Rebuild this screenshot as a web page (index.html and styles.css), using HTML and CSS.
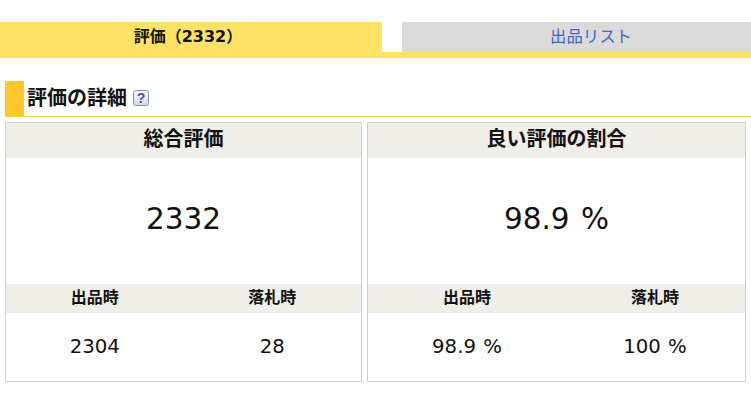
FILE: index.html
```html
<!DOCTYPE html>
<html lang="ja">
<head>
<meta charset="utf-8">
<title>評価の詳細</title>
<link rel="stylesheet" href="styles.css">
</head>
<body>
<nav class="tabs">
  <div class="tab tab-active">評価（2332）</div>
  <a class="tab tab-link" href="#">出品リスト</a>
</nav>
<h2 class="heading">
  <span class="heading-text">評価の詳細</span>
  <svg class="help" width="16" height="16" viewBox="0 0 16 16" aria-hidden="true">
    <defs>
      <linearGradient id="help-fill" x1="0" y1="0" x2="0" y2="1">
        <stop offset="0" stop-color="#f6f8fc"/>
        <stop offset="1" stop-color="#d3d9e8"/>
      </linearGradient>
    </defs>
    <rect x="0.5" y="0.5" width="15" height="15" rx="2" fill="url(#help-fill)" stroke="#8f949c"/>
    <text x="8" y="13" text-anchor="middle" class="help-mark">?</text>
  </svg>
</h2>
<div class="cards">
  <section class="card card-left">
    <h3 class="card-title">総合評価</h3>
    <div class="card-value">2332</div>
    <div class="sub-head"><span>出品時</span><span>落札時</span></div>
    <div class="sub-values"><span>2304</span><span>28</span></div>
  </section>
  <section class="card card-right">
    <h3 class="card-title">良い評価の割合</h3>
    <div class="card-value">98.9 %</div>
    <div class="sub-head"><span>出品時</span><span>落札時</span></div>
    <div class="sub-values"><span>98.9 %</span><span>100 %</span></div>
  </section>
</div>
</body>
</html>
```
FILE: styles.css
```css
* { box-sizing: border-box; }
html, body { margin: 0; padding: 0; }
body {
  width: 751px;
  height: 405px;
  overflow: hidden;
  background: #fff;
  color: #111;
  font-family: "DejaVu Sans", "Noto Sans CJK JP", sans-serif;
  padding-top: 22px;
}
.tabs {
  display: flex;
  height: 36px;
  border-bottom: 6px solid #ffe266;
}
.tab {
  height: 30px;
  line-height: 30px;
  text-align: center;
}
.tab-active {
  width: 382px;
  height: 36px;
  padding-right: 6px;
  background: #ffe266;
  font-size: 16px;
  font-weight: 700;
  color: #111;
}
.tab-link {
  width: 349px;
  margin-left: 20px;
  padding-left: 29px;
  background: #dadada;
  color: #3f66c8;
  text-decoration: none;
  font-size: 16.4px;
}
.heading {
  display: flex;
  align-items: center;
  height: 36px;
  margin: 23px 0 5px 5px;
  border-bottom: 1px solid #f0d866;
  border-left: 19px solid #ffc62e;
  padding-left: 3px;
  font-size: 20px;
  font-weight: 700;
  color: #111;
}
.heading-text { line-height: 30px; margin-top: -2px; }
.help { margin-left: 6px; margin-top: -1px; }
.help-mark {
  font-family: "Liberation Sans", sans-serif;
  font-size: 14px;
  font-weight: 700;
  fill: #3f52b0;
}
.cards {
  display: flex;
  gap: 5px;
  padding-left: 5px;
}
.card {
  display: flex;
  flex-direction: column;
  height: 260px;
  border: 1px solid #d2d2cc;
}
.card-left { width: 357px; }
.card-right { width: 379px; }
.card-title {
  margin: 0;
  height: 35px;
  line-height: 33px;
  background: #efeee8;
  font-size: 20px;
  font-weight: 700;
  text-align: center;
  color: #111;
}
.card-value {
  height: 126px;
  line-height: 122px;
  font-size: 29.5px;
  word-spacing: 2px;
  text-align: center;
}
.sub-head, .sub-values {
  display: grid;
  grid-template-columns: 1fr 1fr;
  text-align: center;
}
.card-right .sub-head, .card-right .sub-values {
  grid-template-columns: 188px 188px;
  padding-left: 5px;
}
.sub-head {
  height: 29px;
  line-height: 27px;
  background: #efeee8;
  font-size: 16px;
  font-weight: 700;
}
.sub-values {
  flex: 1;
  line-height: 68px;
  font-size: 19.7px;
  word-spacing: 1px;
}
```
